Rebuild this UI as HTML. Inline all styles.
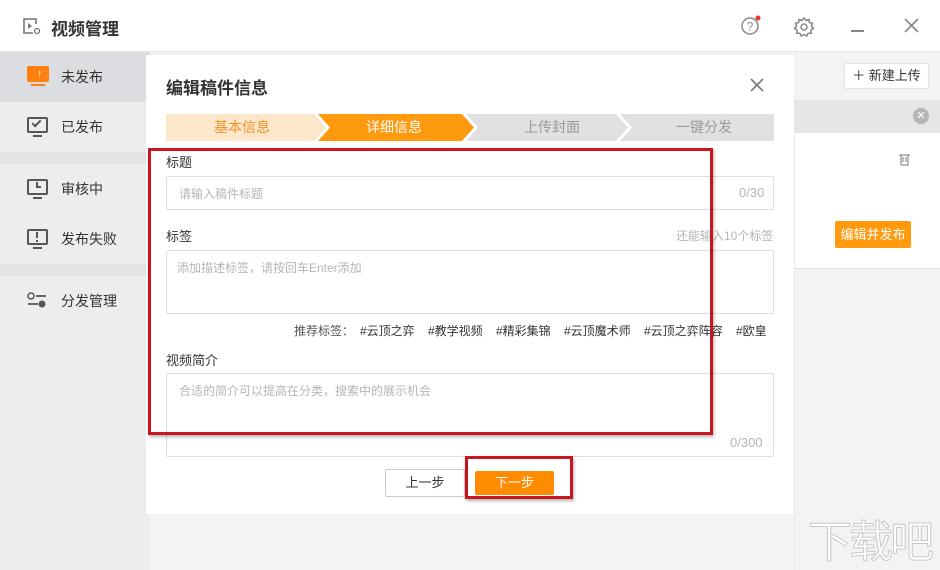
<!DOCTYPE html>
<html><head><meta charset="utf-8"><style>
*{margin:0;padding:0;box-sizing:border-box}
html,body{width:940px;height:570px;overflow:hidden}
body{background:#f3f3f5;font-family:"Liberation Sans","Noto Sans CJK SC",sans-serif;position:relative;font-size:13px;color:#333}
.a{position:absolute}
.top{left:0;top:0;width:940px;height:52px;background:#fff;border-bottom:1px solid #e8e8e8}
.side{left:0;top:52px;width:150px;height:518px;background:#ededf0}
.item{left:0;width:150px;height:50px;font-size:14px;color:#333}
.item span{position:absolute;left:61px;top:15px}
.ic{position:absolute;left:27px;top:15px;width:21px;height:16px;border:2px solid #555;border-radius:2px}
.ic:after{content:"";position:absolute;left:4px;right:4px;bottom:-6px;height:2px;background:#555}
.sep{left:0;width:150px;height:12px;background:#e3e3e6}
.dlg{left:146px;top:55px;width:648px;height:459px;background:#fff}
.lbl{font-size:13px;color:#333}
.inp{border:1px solid #dedede;border-radius:2px;background:#fff}
.ph{color:#b5b5b5;font-size:12px}
.step{top:114px;height:27px;font-size:14px;line-height:27px;text-align:center}
.red{border:3px solid #c8161e;box-shadow:1px 2px 3px rgba(0,0,0,.3)}
.tg{top:322px;font-size:12px;color:#333;white-space:nowrap}
</style></head><body>
<div class="a top"></div>
<svg class="a" style="left:22px;top:17px" width="20" height="18" viewBox="0 0 20 18"><path d="M14 7V2H2v14h9" fill="none" stroke="#777" stroke-width="1.6"/><path d="M6 6l4 3-4 3z" fill="#777"/><circle cx="15" cy="14" r="2.5" fill="none" stroke="#777" stroke-width="1.3"/></svg>
<div class="a" style="left:51px;top:15px;font-size:17px;font-weight:bold;color:#333">视频管理</div>
<svg class="a" style="left:739px;top:14px" width="26" height="24"><circle cx="11" cy="12" r="8" fill="none" stroke="#888" stroke-width="1.5"/><text x="11" y="16.5" font-size="12" text-anchor="middle" fill="#888" font-family="Liberation Sans">?</text><circle cx="19" cy="4" r="2.5" fill="#e33"/></svg>
<svg class="a" style="left:793px;top:16px" width="22" height="22" viewBox="0 0 22 22"><path d="M11 2l2 2.5 3-1 .5 3 3 .8-1 3 2 2-2.5 1.7.3 3.1-3.1.1-1.4 2.8L11 18.5 8.2 20l-1.4-2.8-3.1-.1.3-3.1L1.5 12.3l2-2-1-3 3-.8.5-3 3 1z" fill="none" stroke="#888" stroke-width="1.5"/><circle cx="11" cy="11" r="3" fill="none" stroke="#888" stroke-width="1.5"/></svg>
<div class="a" style="left:851px;top:30px;width:13px;height:2px;background:#888"></div>
<svg class="a" style="left:904px;top:18px" width="15" height="15"><path d="M1 1l13 13M14 1L1 14" stroke="#888" stroke-width="1.6"/></svg>

<div class="a side"></div>
<div class="a item" style="top:52px;background:#dcdde1"><div style="position:absolute;left:27px;top:14px;width:22px;height:16px;background:#ff7f0f;border-radius:2px"></div><div style="position:absolute;left:31px;top:32px;width:14px;height:2px;background:#ff7f0f"></div><div style="position:absolute;left:37px;top:17px;color:#fff;font-size:11px;font-weight:bold;line-height:10px">↑</div><span>未发布</span></div>
<div class="a item" style="top:102px"><div class="ic"></div><div style="position:absolute;left:32px;top:18px;width:9px;height:5px;border-left:2px solid #555;border-bottom:2px solid #555;transform:rotate(-45deg)"></div><span>已发布</span></div>
<div class="a sep" style="top:152px"></div>
<div class="a item" style="top:164px"><div class="ic"></div><div style="position:absolute;left:36px;top:18px;width:5px;height:6px;border-left:2px solid #555;border-bottom:2px solid #555"></div><span>审核中</span></div>
<div class="a item" style="top:214px"><div class="ic"></div><div style="position:absolute;left:36px;top:18px;width:2px;height:6px;background:#555"></div><div style="position:absolute;left:36px;top:26px;width:2px;height:2px;background:#555"></div><span>发布失败</span></div>
<div class="a sep" style="top:264px"></div>
<div class="a item" style="top:276px"><svg style="position:absolute;left:27px;top:16px" width="22" height="16"><circle cx="4" cy="4" r="3" fill="none" stroke="#555" stroke-width="1.5"/><path d="M9 4h10M1 12h10" stroke="#555" stroke-width="1.8"/><circle cx="15" cy="12" r="3.5" fill="#555"/></svg><span>分发管理</span></div>

<div class="a" style="left:844px;top:63px;width:85px;height:26px;background:#fff;border:1px solid #e3e3e3;border-radius:2px;font-size:13px;line-height:24px;text-align:center;color:#333">＋ 新建上传</div>
<div class="a" style="left:794px;top:100px;width:146px;height:33px;background:#e6e6e9"></div>
<div class="a" style="left:913px;top:108px;width:16px;height:16px;border-radius:50%;background:#b5b5b8;color:#fff;font-size:11px;line-height:16px;text-align:center">✕</div>
<div class="a" style="left:794px;top:133px;width:146px;height:136px;background:#fff;border-bottom:1px solid #e2e2e2"></div>
<svg class="a" style="left:898px;top:153px" width="13" height="13"><path d="M1 2h11M3 2v10h7V2M5 4v5M8 4v5" fill="none" stroke="#777" stroke-width="1"/></svg>
<div class="a" style="left:835px;top:221px;width:76px;height:27px;background:#ff9a0f;color:#fff;border-radius:2px;font-size:13px;line-height:27px;text-align:center">编辑并发布</div>
<div class="a" style="left:794px;top:133px;width:1px;height:437px;background:#e8e8e8"></div>

<div class="a dlg"></div>
<div class="a" style="left:166px;top:74px;font-size:17px;font-weight:bold;color:#333">编辑稿件信息</div>
<svg class="a" style="left:750px;top:78px" width="14" height="14"><path d="M1 1l12 12M13 1L1 13" stroke="#777" stroke-width="1.6"/></svg>

<svg class="a" style="left:166px;top:114px" width="608" height="27">
<rect x="0" y="0" width="608" height="27" fill="#e1e1e4"/>
<polygon points="0,0 148,0 160,13.5 148,27 0,27" fill="#fde7cb"/>
<polygon points="148,0 152,0 164,13.5 152,27 148,27 160,13.5" fill="#fff"/>
<polygon points="152,0 296,0 308,13.5 296,27 152,27 164,13.5" fill="#ff9a0f"/>
<polygon points="296,0 300,0 312,13.5 300,27 296,27 308,13.5" fill="#fff"/>
<polygon points="450,0 454,0 466,13.5 454,27 450,27 462,13.5" fill="#fff"/>
</svg>
<div class="a step" style="left:166px;width:152px;color:#f0922a">基本信息</div>
<div class="a step" style="left:318px;width:152px;color:#fff">详细信息</div>
<div class="a step" style="left:476px;width:152px;color:#999">上传封面</div>
<div class="a step" style="left:628px;width:152px;color:#999">一键分发</div>

<div class="a lbl" style="left:166px;top:152px">标题</div>
<div class="a inp" style="left:166px;top:176px;width:608px;height:34px"></div>
<div class="a ph" style="left:179px;top:185px">请输入稿件标题</div>
<div class="a ph" style="left:739px;top:185px;font-size:13px">0/30</div>
<div class="a lbl" style="left:166px;top:226px">标签</div>
<div class="a ph" style="left:676px;top:227px">还能输入10个标签</div>
<div class="a inp" style="left:166px;top:250px;width:608px;height:64px"></div>
<div class="a ph" style="left:177px;top:259px">添加描述标签，请按回车Enter添加</div>
<div class="a tg" style="left:294px;color:#555">推荐标签：</div>
<div class="a tg" style="left:360px">#云顶之弈</div>
<div class="a tg" style="left:428px">#教学视频</div>
<div class="a tg" style="left:496px">#精彩集锦</div>
<div class="a tg" style="left:564px">#云顶魔术师</div>
<div class="a tg" style="left:644px">#云顶之弈阵容</div>
<div class="a tg" style="left:736px">#欧皇</div>
<div class="a lbl" style="left:166px;top:350px">视频简介</div>
<div class="a inp" style="left:166px;top:373px;width:608px;height:84px"></div>
<div class="a ph" style="left:179px;top:382px">合适的简介可以提高在分类，搜索中的展示机会</div>
<div class="a ph" style="left:730px;top:435px;font-size:13px">0/300</div>

<div class="a" style="left:385px;top:469px;width:80px;height:28px;border:1px solid #ccc;border-radius:2px;background:#fff;font-size:13px;line-height:26px;text-align:center">上一步</div>
<div class="a" style="left:475px;top:471px;width:79px;height:24px;background:#ff8c00;border-radius:2px;color:#fff;font-size:13px;line-height:24px;text-align:center">下一步</div>

<div class="a red" style="left:148px;top:148px;width:565px;height:287px"></div>
<div class="a red" style="left:465px;top:456px;width:108px;height:43px"></div>

<div class="a" style="left:808px;top:518px;font-size:44px;color:#fff;letter-spacing:-3px;-webkit-text-stroke:1px #c8c8cc;line-height:50px">下载吧</div>
</body></html>
